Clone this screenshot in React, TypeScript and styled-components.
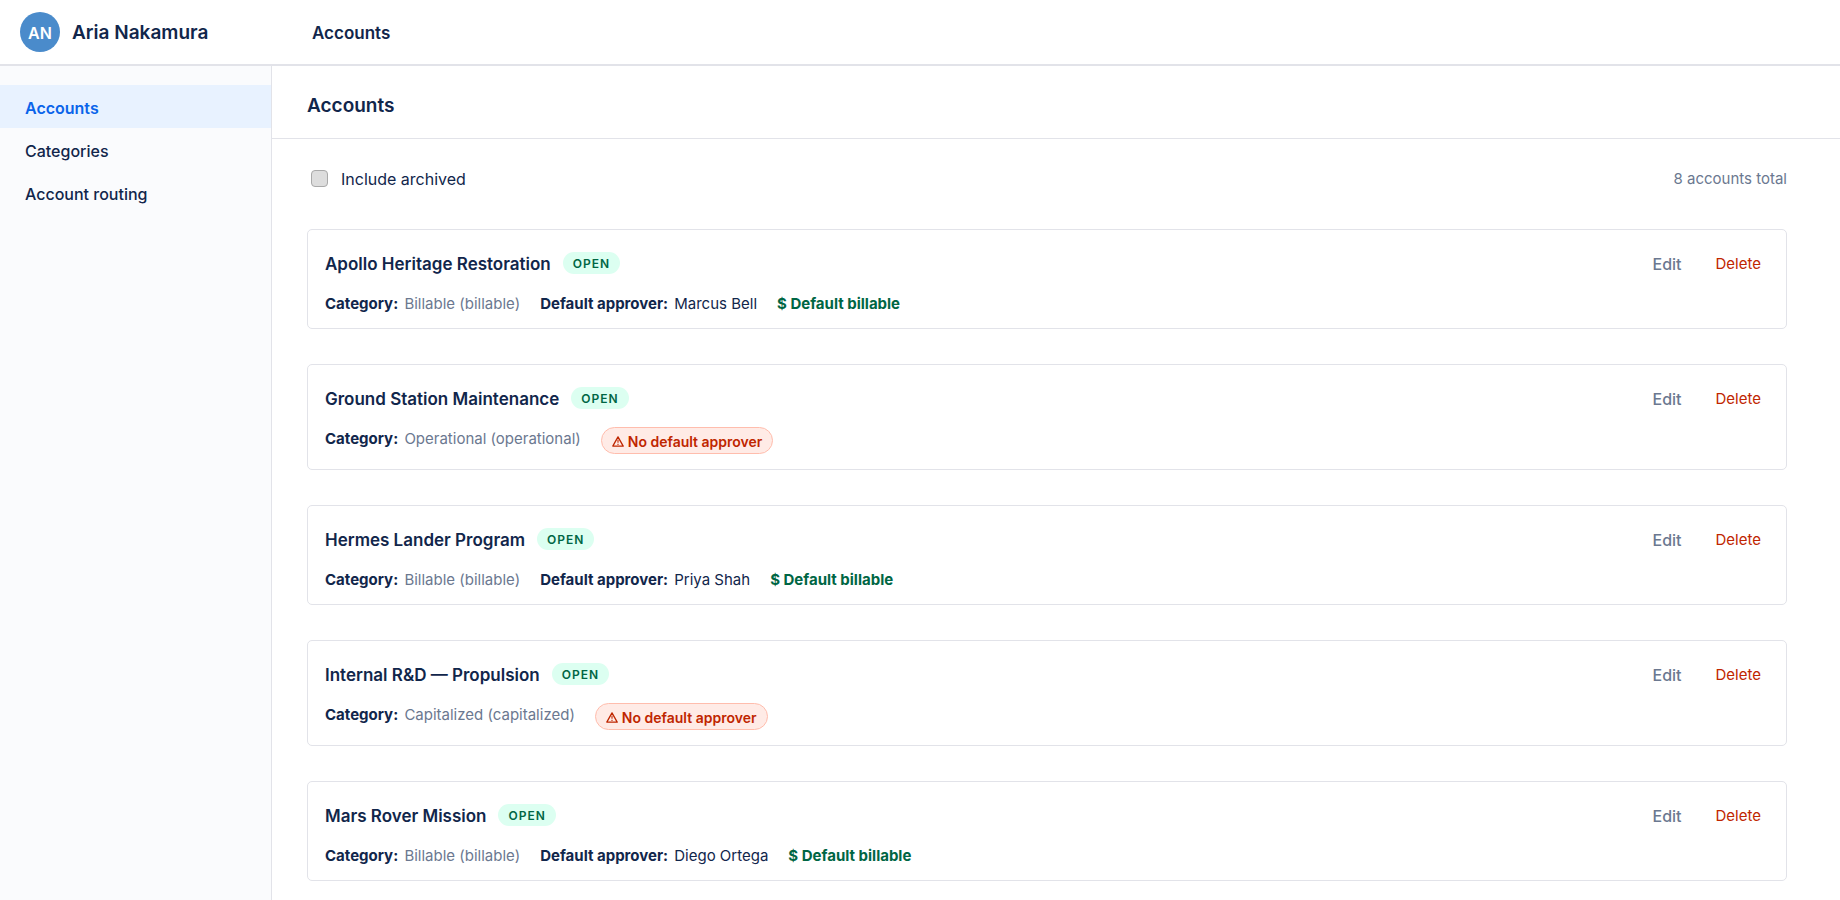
import React from "react";
import styled, { createGlobalStyle, css } from "styled-components";

const color = {
  text: "#11264b",
  muted: "#6b7890",
  line: "#e2e3e9",
  link: "#0a64ea",
  danger: "#bf2600",
  success: "#006644",
};

const GlobalStyle = createGlobalStyle`
  *, *::before, *::after { box-sizing: border-box; }
  body {
    margin: 0;
    background: #fff;
    color: ${color.text};
    font-family: Inter, "Liberation Sans", sans-serif;
    font-size: 15px;
    line-height: 20px;
  }
`;

const Page = styled.div`
  display: grid;
  grid-template-columns: 272px minmax(0, 1fr);
  grid-template-rows: 66px 1fr;
  height: 100vh;
  overflow: hidden;
`;

const TopBar = styled.header`
  grid-column: 1 / -1;
  display: flex;
  align-items: center;
  border-bottom: 2px solid ${color.line};
`;

const Profile = styled.div`
  display: flex;
  align-items: center;
  gap: 12px;
  width: 312px;
  padding-left: 20px;
`;

const UserName = styled.span`
  padding-top: 2px;
  font-size: 19px;
  font-weight: 600;
`;

const Avatar = styled.span`
  display: grid;
  place-items: center;
  width: 40px;
  height: 40px;
  padding-top: 2px;
  border-radius: 50%;
  background: #4a8bcb;
  color: #fff;
  font-size: 16px;
  font-weight: 600;
`;

const Crumb = styled.span`
  padding-top: 2px;
  font-size: 17px;
  font-weight: 600;
`;

const Sidebar = styled.nav`
  display: flex;
  flex-direction: column;
  padding-top: 19px;
  background: #fafbfd;
  border-right: 1px solid ${color.line};
`;

const NavLink = styled.a<{ $active?: boolean }>`
  padding: 13px 25px 10px;
  font-size: 16px;
  font-weight: 500;
  color: ${color.text};
  text-decoration: none;
  ${(p) =>
    p.$active &&
    css`
      background: #e8f2ff;
      color: ${color.link};
      font-weight: 600;
    `}
`;

const Main = styled.main`
  min-width: 0;
  overflow: hidden;
`;

const PageHeader = styled.div`
  padding: 28px 35px 21px;
  border-bottom: 1px solid ${color.line};
`;

const Title = styled.h1`
  margin: 0;
  font-size: 19px;
  line-height: 23px;
  font-weight: 600;
`;

const Content = styled.div`
  padding: 30px 53px 0 35px;
`;

const Toolbar = styled.div`
  display: flex;
  align-items: center;
  justify-content: space-between;
  margin-bottom: 40px;
`;

const CheckLabel = styled.label`
  display: flex;
  align-items: center;
  gap: 13px;
  padding-left: 4px;
  font-size: 16px;
`;

const Checkbox = styled.input`
  appearance: none;
  width: 17px;
  height: 17px;
  margin: 0 0 2px;
  border: 1px solid #a9a9a9;
  border-radius: 4px;
  background: #dddddd;
`;

const Total = styled.span`
  color: ${color.muted};
  font-size: 15px;
`;

const List = styled.ul`
  display: flex;
  flex-direction: column;
  gap: 35px;
  margin: 0;
  padding: 0;
  list-style: none;
`;

const Card = styled.li`
  display: flex;
  justify-content: space-between;
  align-items: flex-start;
  padding: 21px 25px 12px 17px;
  border: 1px solid ${color.line};
  border-radius: 5px;
`;

const CardTitle = styled.div`
  display: flex;
  align-items: center;
  gap: 12px;
  height: 26px;
`;

const Name = styled.h2`
  margin: 0;
  font-size: 17px;
  line-height: 26px;
  font-weight: 600;
`;

const Status = styled.span`
  padding: 2px 10px 0;
  margin-bottom: 2px;
  border-radius: 11px;
  background: #dcfff1;
  color: ${color.success};
  font-size: 12px;
  font-weight: 600;
  letter-spacing: 1px;
`;

const Meta = styled.div`
  display: flex;
  align-items: flex-start;
  gap: 20px;
  margin-top: 15px;
  font-size: 15px;
  line-height: 24px;
`;

const Field = styled.span<{ $muted?: boolean }>`
  color: ${(p) => (p.$muted ? color.muted : color.text)};

  b {
    margin-right: 2px;
    color: ${color.text};
    font-weight: 700;
  }
`;

const Billable = styled.span`
  color: ${color.success};
  font-weight: 700;
`;

const Warning = styled.span`
  display: flex;
  align-items: center;
  gap: 4px;
  height: 27px;
  margin-bottom: 3px;
  padding: 2px 10px 0;
  border: 1px solid #ffbdad;
  border-radius: 14px;
  background: #ffebe6;
  color: ${color.danger};
  font-size: 14px;
  font-weight: 600;
`;

const Actions = styled.div`
  display: flex;
  align-items: center;
  gap: 34px;
`;

const Action = styled.button<{ $danger?: boolean }>`
  padding: 0;
  border: 0;
  background: none;
  font-family: inherit;
  font-size: ${(p) => (p.$danger ? 15 : 16)}px;
  font-weight: ${(p) => (p.$danger ? 400 : 500)};
  line-height: 26px;
  color: ${(p) => (p.$danger ? color.danger : color.muted)};
  cursor: pointer;
`;

const WarningIcon = () => (
  <svg width="12" height="11" viewBox="0 0 12 11" fill="none" stroke="currentColor" strokeLinejoin="round" aria-hidden="true">
    <path d="M6 .9 11.2 10.1H.8Z" strokeWidth="1.3" />
    <path d="M6 3.8v3M6 7.7v1.2" strokeWidth="1.1" />
  </svg>
);

type Account = { name: string; category: string; approver?: string };

const accounts: Account[] = [
  { name: "Apollo Heritage Restoration", category: "Billable (billable)", approver: "Marcus Bell" },
  { name: "Ground Station Maintenance", category: "Operational (operational)" },
  { name: "Hermes Lander Program", category: "Billable (billable)", approver: "Priya Shah" },
  { name: "Internal R&D — Propulsion", category: "Capitalized (capitalized)" },
  { name: "Mars Rover Mission", category: "Billable (billable)", approver: "Diego Ortega" },
];

const AccountCard = ({ name, category, approver }: Account) => (
  <Card>
    <div>
      <CardTitle>
        <Name>{name}</Name>
        <Status>OPEN</Status>
      </CardTitle>
      <Meta>
        <Field $muted>
          <b>Category:</b> {category}
        </Field>
        {approver ? (
          <>
            <Field>
              <b>Default approver:</b> {approver}
            </Field>
            <Billable>$ Default billable</Billable>
          </>
        ) : (
          <Warning>
            <WarningIcon />
            No default approver
          </Warning>
        )}
      </Meta>
    </div>
    <Actions>
      <Action type="button">Edit</Action>
      <Action type="button" $danger>
        Delete
      </Action>
    </Actions>
  </Card>
);

export default function App() {
  return (
    <Page>
      <GlobalStyle />
      <TopBar>
        <Profile>
          <Avatar>AN</Avatar>
          <UserName>Aria Nakamura</UserName>
        </Profile>
        <Crumb>Accounts</Crumb>
      </TopBar>
      <Sidebar>
        <NavLink href="#accounts" $active>
          Accounts
        </NavLink>
        <NavLink href="#categories">Categories</NavLink>
        <NavLink href="#routing">Account routing</NavLink>
      </Sidebar>
      <Main>
        <PageHeader>
          <Title>Accounts</Title>
        </PageHeader>
        <Content>
          <Toolbar>
            <CheckLabel>
              <Checkbox type="checkbox" />
              Include archived
            </CheckLabel>
            <Total>8 accounts total</Total>
          </Toolbar>
          <List>
            {accounts.map((account) => (
              <AccountCard key={account.name} {...account} />
            ))}
          </List>
        </Content>
      </Main>
    </Page>
  );
}
